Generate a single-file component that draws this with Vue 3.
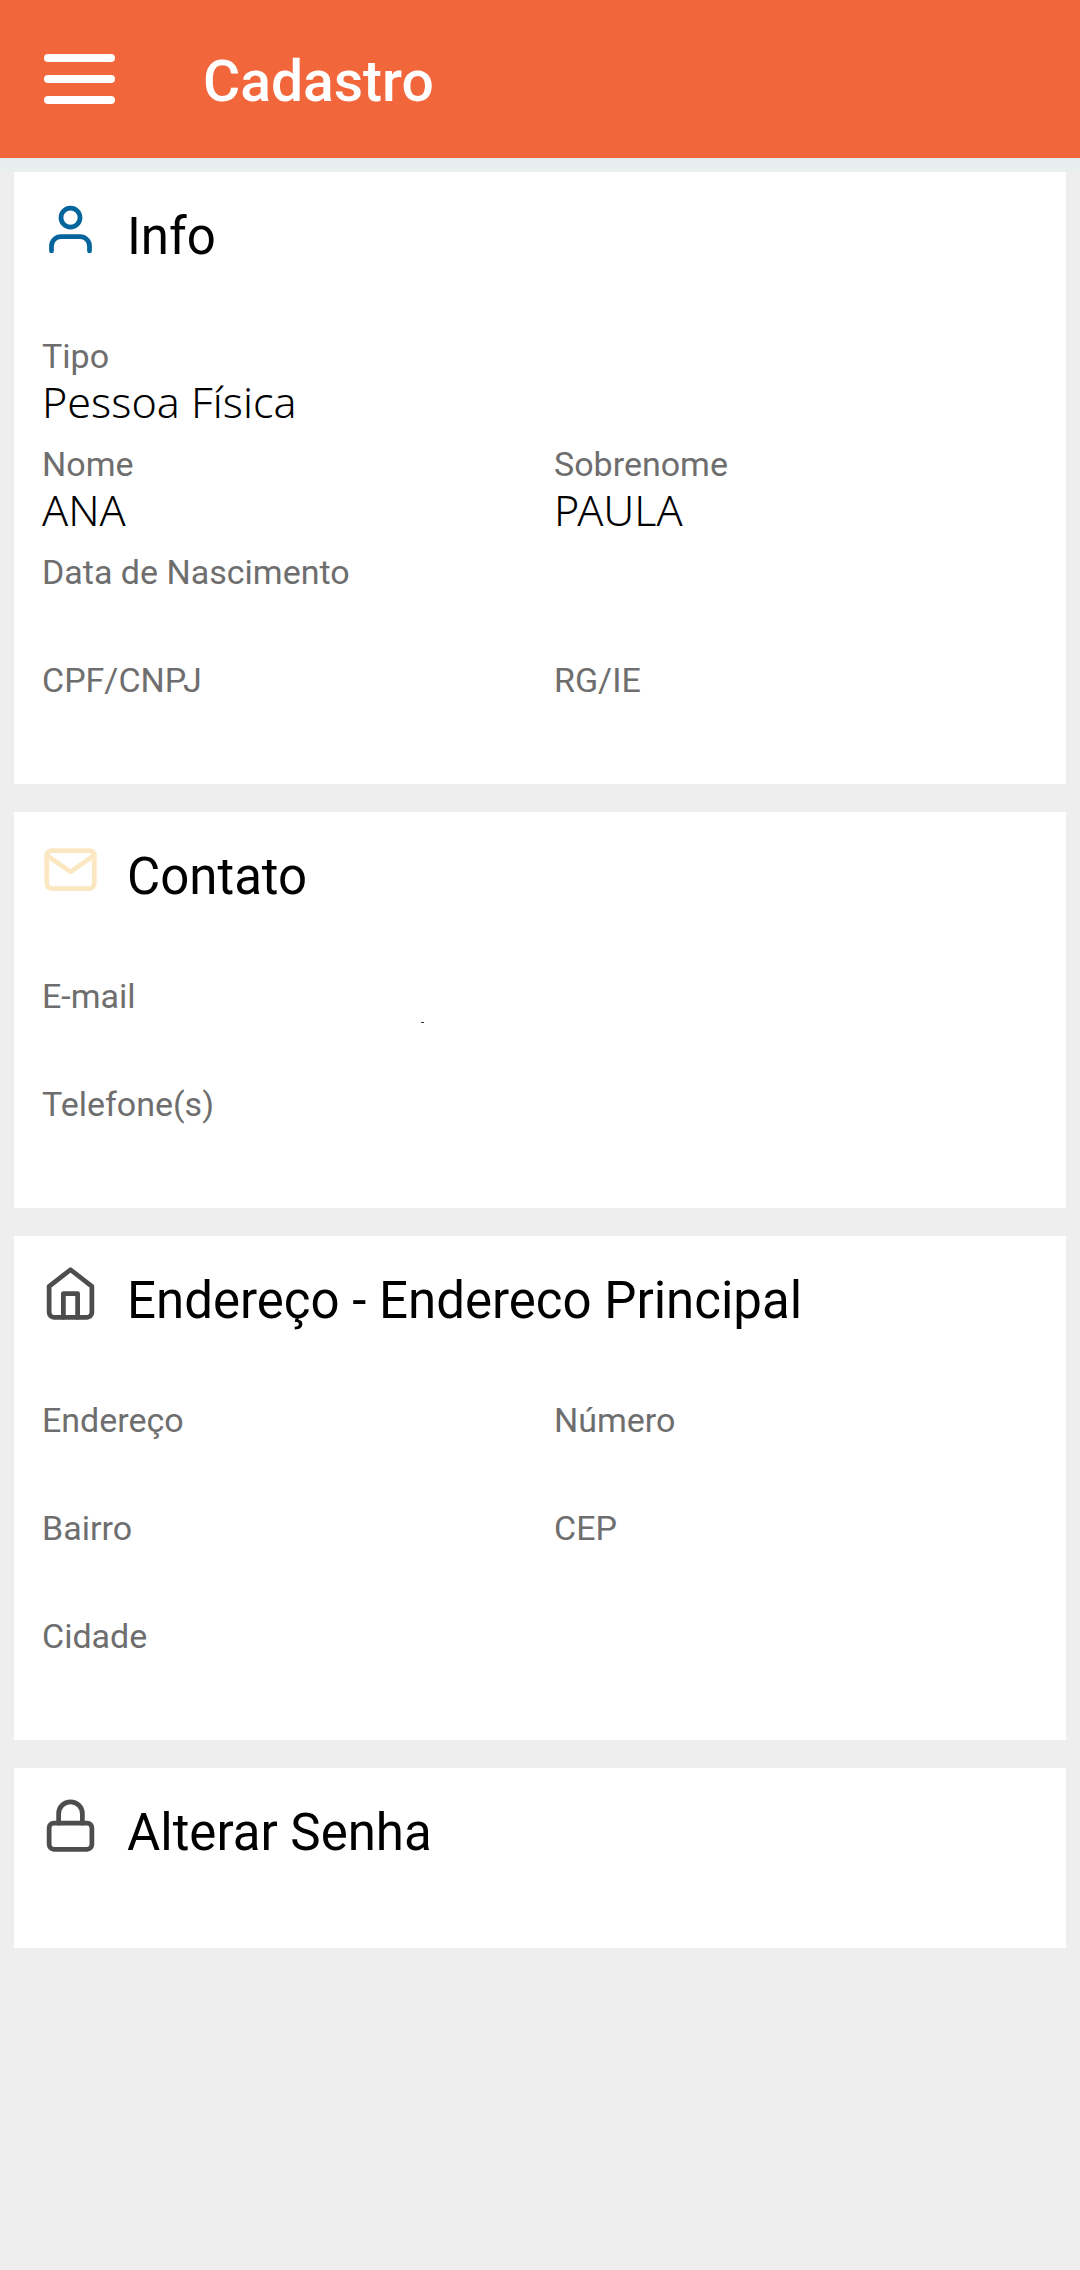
<script setup>
const sections = [
  {
    title: 'Info',
    icon: 'user',
    fields: [
      { label: 'Tipo', value: 'Pessoa Física', wide: true },
      { label: 'Nome', value: 'ANA' },
      { label: 'Sobrenome', value: 'PAULA' },
      { label: 'Data de Nascimento', value: '', wide: true },
      { label: 'CPF/CNPJ', value: '' },
      { label: 'RG/IE', value: '' },
    ],
  },
  {
    title: 'Contato',
    icon: 'mail',
    fields: [
      { label: 'E-mail', value: '', wide: true, mark: true },
      { label: 'Telefone(s)', value: '', wide: true },
    ],
  },
  {
    title: 'Endereço - Endereco Principal',
    icon: 'home',
    fields: [
      { label: 'Endereço', value: '' },
      { label: 'Número', value: '' },
      { label: 'Bairro', value: '' },
      { label: 'CEP', value: '' },
      { label: 'Cidade', value: '', wide: true },
    ],
  },
  { title: 'Alterar Senha', icon: 'lock', href: '#senha', fields: [] },
]

const icons = {
  user: ['M20 21v-2a4 4 0 0 0-4-4H8a4 4 0 0 0-4 4v2', 'M12 3a4 4 0 1 1 0 8a4 4 0 1 1 0-8z'],
  mail: ['M4 4h16a2 2 0 0 1 2 2v12a2 2 0 0 1-2 2H4a2 2 0 0 1-2-2V6a2 2 0 0 1 2-2z', 'M22 6l-10 7L2 6'],
  home: ['M3 9l9-7 9 7v11a2 2 0 0 1-2 2H5a2 2 0 0 1-2-2z', 'M9 22V12h6v10'],
  lock: ['M5 11h14a2 2 0 0 1 2 2v7a2 2 0 0 1-2 2H5a2 2 0 0 1-2-2v-7a2 2 0 0 1 2-2z', 'M7 11V7a5 5 0 0 1 10 0v4'],
}
</script>

<template>
  <div class="page">
    <header class="topbar">
      <button class="menu" type="button" aria-label="Abrir menu">
        <span></span><span></span><span></span>
      </button>
      <h1>Cadastro</h1>
    </header>
    <main class="content">
      <section v-for="s in sections" :key="s.title" class="card">
        <component :is="s.href ? 'a' : 'div'" class="heading" :href="s.href">
          <svg :class="['icon', s.icon]" viewBox="0 0 24 24" aria-hidden="true">
            <path v-for="d in icons[s.icon]" :key="d" :d="d" />
          </svg>
          <h2>{{ s.title }}</h2>
        </component>
        <dl v-if="s.fields.length" class="fields">
          <div v-for="f in s.fields" :key="f.label" :class="['field', { wide: f.wide }]">
            <dt>{{ f.label }}</dt>
            <dd>{{ f.value }}<span v-if="f.mark" class="mark"></span></dd>
          </div>
        </dl>
      </section>
    </main>
  </div>
</template>

<style>
body {
  margin: 0;
  background: #eeeeee;
}
</style>

<style scoped>
.page {
  min-height: 100vh;
  font-family: Roboto, "Liberation Sans", sans-serif;
  color: #000;
}
.topbar {
  display: flex;
  align-items: center;
  gap: 88px;
  height: 158px;
  padding: 0 44px;
  background: #f2663c;
  color: #fff;
}
.menu {
  display: flex;
  flex-direction: column;
  gap: 13px;
  width: 71px;
  padding: 0;
  border: 0;
  background: none;
}
.menu span {
  height: 8px;
  border-radius: 4px;
  background: #fff;
}
h1 {
  margin: 6px 0 0;
  font-size: 57px;
  line-height: 72px;
  font-weight: 500;
}
.content {
  display: flex;
  flex-direction: column;
  gap: 28px;
  padding: 14px;
  background: linear-gradient(#e3edef, #eaeeee 14px, #eeeeee 15px) no-repeat top / 100% 15px;
}
.card {
  padding: 29px 14px 16px;
  background: #fff;
}
.heading {
  display: flex;
  align-items: flex-start;
  gap: 28px;
  margin-bottom: 63px;
  padding: 0 14px;
  color: inherit;
  text-decoration: none;
}
.icon {
  flex: none;
  width: 57px;
  height: 57px;
  fill: none;
  stroke: #4d4d4d;
  stroke-width: 2;
  stroke-linecap: round;
  stroke-linejoin: round;
}
.icon.user {
  stroke: #04659c;
}
.icon.mail {
  stroke: #fbe8c2;
}
h2 {
  margin: 0;
  font-size: 51px;
  line-height: 72px;
  font-weight: 400;
}
.fields {
  display: flex;
  flex-wrap: wrap;
  margin: 0;
}
.field {
  box-sizing: border-box;
  width: 50%;
  padding: 0 14px 16px;
}
.field.wide {
  width: 100%;
}
dt {
  font-size: 34px;
  line-height: 40px;
  color: #6e6e6e;
}
dd {
  position: relative;
  height: 52px;
  margin: 0;
  font-family: "Noto Sans", "Open Sans", sans-serif;
  font-size: 43px;
  line-height: 52px;
  font-weight: 300;
}
.mark {
  position: absolute;
  top: 6px;
  left: 379px;
  width: 3px;
  height: 1px;
  background: #333;
}
</style>
